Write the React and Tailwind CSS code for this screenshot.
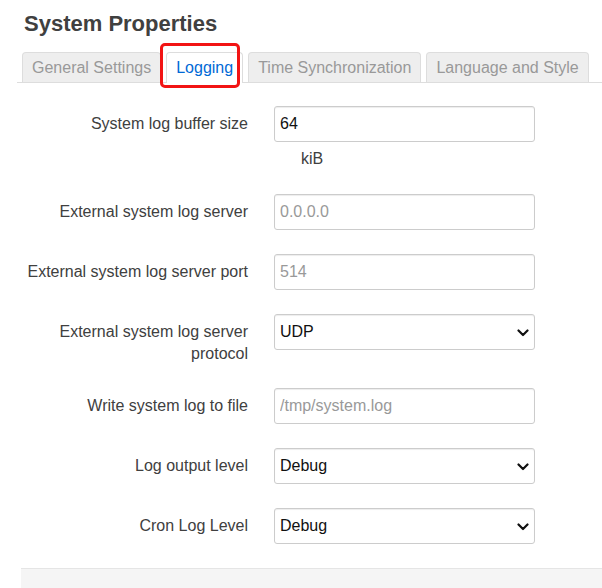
import React from "react";

function Chevron() {
  return (
    <svg className="absolute right-[6px] top-[15px] pointer-events-none" width="12" height="8" viewBox="0 0 12 8">
      <path d="M1.5 1.5 L6 6 L10.5 1.5" fill="none" stroke="#111" strokeWidth="2.2" strokeLinecap="round" strokeLinejoin="round" />
    </svg>
  );
}

function TextInput({ value, placeholder }) {
  return (
    <input
      readOnly
      value={value}
      placeholder={placeholder}
      className="w-[261px] h-[36px] border border-[#ccc] rounded-[3px] pl-[5px] text-[16px] text-[#111] placeholder:text-[#999] shadow-[inset_0_1px_1px_rgba(0,0,0,0.075)] outline-none bg-white"
    />
  );
}

function Select({ value }) {
  return (
    <div className="relative w-[261px] h-[36px]">
      <div className="w-[261px] h-[36px] border border-[#ccc] rounded-[3px] pl-[5px] text-[16px] text-[#111] leading-[34px] shadow-[inset_0_1px_1px_rgba(0,0,0,0.075)] bg-white">
        {value}
      </div>
      <Chevron />
    </div>
  );
}

function Row({ label, children, desc }) {
  return (
    <div className="flex items-start">
      <div className="ml-[17px] w-[231px] text-right pt-[7px] leading-[22px] text-[16px] text-[#404040]">
        {label}
      </div>
      <div className="ml-[26px] flex flex-col">
        {children}
        {desc && (
          <div className="mt-[6px] pl-[27px] leading-[22px] text-[16px] text-[#404040]">{desc}</div>
        )}
      </div>
    </div>
  );
}

export default function App() {
  const tabs = ["General Settings", "Logging", "Time Synchronization", "Language and Style"];
  return (
    <div className="relative w-[602px] h-[588px] overflow-hidden bg-white font-['Liberation_Sans',Arial,sans-serif] text-[#404040]">
      <h2 className="pl-[24px] pt-[11px] text-[22px] leading-[26px] font-bold text-[#404040]">System Properties</h2>
      <div className="mt-[15px] ml-[17px] pl-[5px] flex items-start gap-[5px] border-b border-[#ddd] h-[31px]">
        {tabs.map((t, i) =>
          i === 1 ? (
            <div
              key={t}
              className="relative z-10 h-[31px] px-[9px] border-t border-x border-[#ddd] rounded-t-[4px] bg-white text-[#0069d6] text-[16px] leading-[29px] whitespace-nowrap"
            >
              {t}
            </div>
          ) : (
            <div
              key={t}
              className="h-[30px] px-[9px] border-t border-x border-[#ddd] rounded-t-[4px] bg-[#eee] text-[#999] text-[16px] leading-[29px] whitespace-nowrap"
            >
              {t}
            </div>
          )
        )}
      </div>
      <div className="absolute left-[160px] top-[43px] w-[80px] h-[45px] border-[3px] border-[#f21414] rounded-[5px] z-20 pointer-events-none" />

      <div className="mt-[23px] flex flex-col gap-[24px]">
        <Row label="System log buffer size" desc="kiB">
          <TextInput value="64" />
        </Row>
        <Row label="External system log server">
          <TextInput value="" placeholder="0.0.0.0" />
        </Row>
        <Row label="External system log server port">
          <TextInput value="" placeholder="514" />
        </Row>
        <Row label="External system log server protocol">
          <Select value="UDP" />
        </Row>
        <div className="-mt-px">
          <Row label="Write system log to file">
            <TextInput value="" placeholder="/tmp/system.log" />
          </Row>
        </div>
        <Row label="Log output level">
          <Select value="Debug" />
        </Row>
        <Row label="Cron Log Level">
          <Select value="Debug" />
        </Row>
      </div>
      <div className="mt-[24px] ml-[21px] h-[40px] border-t border-[#e5e5e5] bg-[#f5f5f5]" />
    </div>
  );
}
